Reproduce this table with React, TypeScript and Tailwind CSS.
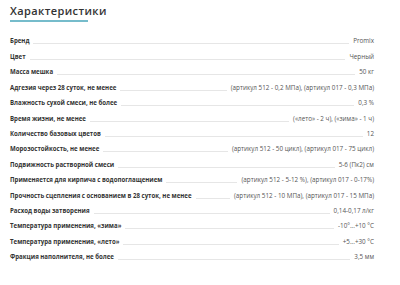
import React from "react";

type Spec = {
  label: string;
  value: string;
};

const specs: Spec[] = [
  { label: "Бренд", value: "Promix" },
  { label: "Цвет", value: "Черный" },
  { label: "Масса мешка", value: "50 кг" },
  { label: "Адгезия через 28 суток, не менее", value: "(артикул 512 - 0,2 МПа), (артикул 017 - 0,3 МПа)" },
  { label: "Влажность сухой смеси, не более", value: "0,3 %" },
  { label: "Время жизни, не менее", value: "(«лето» - 2 ч), («зима» - 1 ч)" },
  { label: "Количество базовых цветов", value: "12" },
  { label: "Морозостойкость, не менее", value: "(артикул 512 - 50 цикл), (артикул 017 - 75 цикл)" },
  { label: "Подвижность растворной смеси", value: "5-6 (Пк2) см" },
  { label: "Применяется для кирпича с водопоглащением", value: "(артикул 512 - 5-12 %), (артикул 017 - 0-17%)" },
  { label: "Прочность сцепления с основанием в 28 суток, не менее", value: "(артикул 512 - 10 МПа), (артикул 017 - 15 МПа)" },
  { label: "Расход воды затворения", value: "0,14-0,17 л/кг" },
  { label: "Температура применения, «зима»", value: "-10°...+10 °C" },
  { label: "Температура применения, «лето»", value: "+5...+30 °C" },
  { label: "Фракция наполнителя, не более", value: "3,5 мм" },
];

export default function App() {
  return (
    <div className="w-[400px] h-[285px] bg-white overflow-hidden pl-[10px] pr-[26px] pt-[4px] font-['Open_Sans',sans-serif]">
      <div className="w-fit">
        <h2 className="text-[11px] leading-[14px] font-semibold tracking-[0.4px] text-[#333]">
          Характеристики
        </h2>
        <div className="mt-[2px] h-[2px] w-[78px] bg-[#76bccb]" />
      </div>

      <div className="mt-[8px] flex flex-col">
        {specs.map((s) => (
          <div key={s.label} className="flex items-end h-[15.43px]">
            <span className="text-[6.1px] leading-[8px] font-bold text-[#333] whitespace-nowrap">
              {s.label}
            </span>
            <span className="flex-1 mx-[4px] mb-[1px] border-b border-[#e6e6e6]" />
            <span className="text-[6.3px] leading-[8px] text-[#555] whitespace-nowrap">
              {s.value}
            </span>
          </div>
        ))}
      </div>
    </div>
  );
}
